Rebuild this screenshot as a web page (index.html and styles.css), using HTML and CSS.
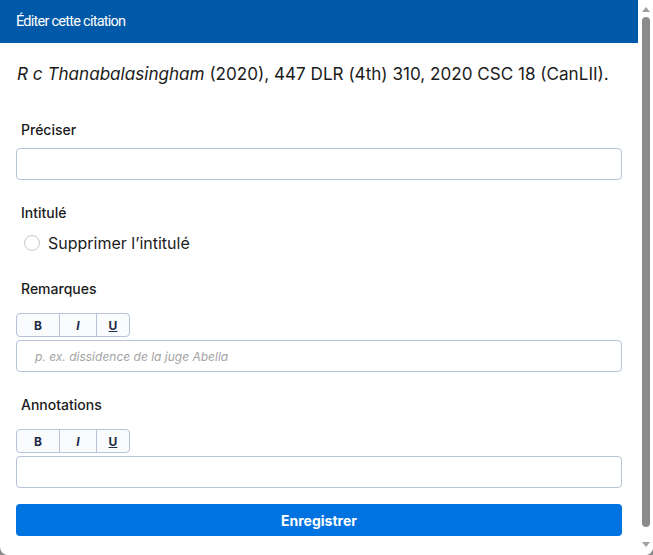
FILE: index.html
```html
<!DOCTYPE html>
<html lang="fr">
<head>
<meta charset="utf-8">
<title>Éditer cette citation</title>
<link rel="stylesheet" href="styles.css">
</head>
<body>
<div class="dialog">
  <div class="main">
    <div class="header">Éditer cette citation</div>
    <div class="content">
      <p class="citation"><em>R c Thanabalasingham</em> (2020), 447 DLR (4th) 310, 2020 CSC 18 (CanLII).</p>

      <div class="field field-first">
        <div class="label">Préciser</div>
        <div class="input"></div>
      </div>

      <div class="field">
        <div class="label">Intitulé</div>
        <div class="radio-row">
          <span class="radio"></span>
          <span class="radio-text">Supprimer l’intitulé</span>
        </div>
      </div>

      <div class="field field-wide">
        <div class="label">Remarques</div>
        <div class="toolbar">
          <span class="tb tb-b">B</span>
          <span class="tb tb-i">I</span>
          <span class="tb tb-u">U</span>
        </div>
        <div class="input input-tight"><span class="placeholder">p. ex. dissidence de la juge Abella</span></div>
      </div>

      <div class="field">
        <div class="label">Annotations</div>
        <div class="toolbar">
          <span class="tb tb-b">B</span>
          <span class="tb tb-i">I</span>
          <span class="tb tb-u">U</span>
        </div>
        <div class="input input-tight"></div>
      </div>

      <div class="save">Enregistrer</div>
    </div>
  </div>
  <div class="scrollbar">
    <span class="arrow arrow-up"></span>
    <span class="thumb"></span>
    <span class="arrow arrow-down"></span>
  </div>
</div>
</body>
</html>
```
FILE: styles.css
```css
html, body {
  margin: 0;
  padding: 0;
}
body {
  background: #8a8a8a;
  font-family: Inter, Roboto, "Noto Sans", Arial, sans-serif;
  color: #1b1b1b;
  width: 653px;
  height: 555px;
  overflow: hidden;
}
.dialog {
  display: flex;
  height: 555px;
  background: #ffffff;
  border-radius: 0 0 8px 8px;
  overflow: hidden;
}
.main {
  flex: 1;
  min-width: 0;
}
.header {
  height: 43px;
  background: #0058a8;
  color: #ffffff;
  display: flex;
  align-items: center;
  padding: 0 16px;
  font-family: Roboto, "Liberation Sans", sans-serif;
  font-size: 14.5px;
  letter-spacing: -0.75px;
}
.content {
  padding: 0 16px;
}
.citation {
  margin: 19px 0 0 1px;
  font-size: 17.1px;
  line-height: 24px;
  color: #1b1b1b;
}
.citation em {
  font-style: italic;
}
.field {
  margin-top: 24px;
}
.field-first {
  margin-top: 35px;
}
.field-wide {
  margin-top: 25px;
}
.label {
  font-size: 14px;
  font-weight: 500;
  line-height: 18px;
  padding-left: 5px;
  color: #1b1b1b;
}
.input {
  margin-top: 9px;
  height: 30px;
  border: 1px solid #b6c3d8;
  border-radius: 4px;
  background: #ffffff;
  display: flex;
  align-items: center;
  padding: 0 18px;
}
.input-tight {
  margin-top: 3px;
}
.placeholder {
  font-size: 12px;
  font-style: italic;
  color: #a3a3a3;
}
.radio-row {
  margin-top: 9px;
  height: 24px;
  display: flex;
  align-items: center;
  padding-left: 8px;
  gap: 8px;
}
.radio {
  width: 14px;
  height: 14px;
  border: 1px solid #c9c9c9;
  border-radius: 50%;
  background: #ffffff;
}
.radio-text {
  font-size: 16px;
  color: #1b1b1b;
}
.toolbar {
  margin-top: 15px;
  display: flex;
  width: fit-content;
  height: 22px;
  border: 1px solid #b6c3d8;
  border-radius: 4px;
  background: #f9fbfd;
  overflow: hidden;
}
.tb {
  display: flex;
  align-items: center;
  justify-content: center;
  font-size: 12px;
  font-weight: 700;
  color: #1e2a48;
  border-left: 1px solid #b6c3d8;
}
.tb-b {
  width: 42px;
  border-left: none;
}
.tb-i {
  width: 36px;
  font-style: italic;
}
.tb-u {
  width: 32px;
  text-decoration: underline;
}
.save {
  margin-top: 16px;
  height: 32px;
  border-radius: 4px;
  background: #0073e0;
  color: #ffffff;
  font-size: 14px;
  font-weight: 700;
  display: flex;
  align-items: center;
  justify-content: center;
}
.scrollbar {
  width: 15px;
  display: flex;
  flex-direction: column;
  align-items: center;
  background: #ffffff;
}
.arrow {
  width: 0;
  height: 0;
  border-left: 4px solid transparent;
  border-right: 4px solid transparent;
}
.arrow-up {
  margin-top: 7px;
  border-bottom: 5px solid #a0a0a0;
}
.arrow-down {
  margin-top: 15px;
  border-top: 5px solid #a0a0a0;
}
.thumb {
  margin-top: 5px;
  width: 8px;
  height: 510px;
  border-radius: 4px;
  background: #8b8b8b;
}
```
